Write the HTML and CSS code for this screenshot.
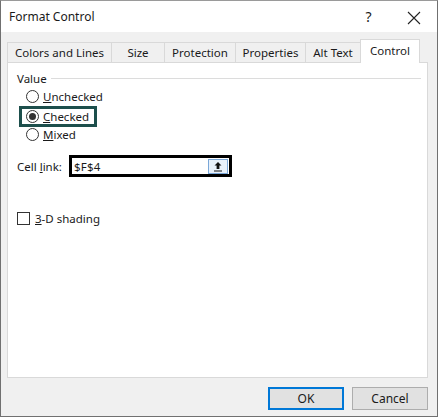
FILE: index.html
```html
<!DOCTYPE html>
<html lang="en">
<head>
    <meta charset="UTF-8">
    <title>Format Control</title>
    <link rel="stylesheet" href="styles.css">
</head>
<body>
    <div class="dialog">
        <div class="titlebar">
            <span class="title">Format Control</span>
            <span class="help">?</span>
            <span class="close">
                <svg width="14" height="14" viewBox="0 0 14 14"><path d="M1 1 L13 13 M13 1 L1 13" stroke="#222" stroke-width="1.1"/></svg>
            </span>
        </div>

        <div class="body">
            <div class="tabs">
                <div class="tab tab-colors">Colors and Lines</div>
                <div class="tab tab-size">Size</div>
                <div class="tab tab-protection">Protection</div>
                <div class="tab tab-properties">Properties</div>
                <div class="tab tab-alt">Alt Text</div>
                <div class="tab tab-control active">Control</div>
            </div>

            <div class="panel">
                <div class="group">
                    <div class="group-title"><span>Value</span></div>
                    <div class="radios">
                        <label class="radio first"><span class="circle"></span><span><u>U</u>nchecked</span></label>
                        <label class="radio highlighted"><span class="circle on"></span><span><u>C</u>hecked</span></label>
                        <label class="radio"><span class="circle"></span><span><u>M</u>ixed</span></label>
                    </div>
                </div>

                <div class="cell-link">
                    <span class="field-label">Cell <u>l</u>ink:</span>
                    <div class="ref-box">
                        <span class="ref-value">$F$4</span>
                        <span class="ref-btn">
                            <svg width="10" height="11" viewBox="0 0 10 11"><path d="M5 1 L1.5 4.5 L3.6 4.5 L3.6 8 L6.4 8 L6.4 4.5 L8.5 4.5 Z" fill="#111"/><rect x="1" y="9.5" width="8" height="1" fill="#111"/></svg>
                        </span>
                    </div>
                </div>

                <label class="checkbox"><span class="box"></span><span><u>3</u>-D shading</span></label>
            </div>

            <div class="footer">
                <button class="btn btn-default">OK</button>
                <button class="btn">Cancel</button>
            </div>
        </div>
    </div>
</body>
</html>
```

FILE: styles.css
```css
* {
    margin: 0;
    padding: 0;
    box-sizing: border-box;
}

body {
    font-family: "Noto Sans", "Open Sans", sans-serif;
    font-size: 11.5px;
    color: #1a1a1a;
    background: #f0f0f0;
}

.dialog {
    width: 438px;
    height: 417px;
    border: 1px solid #707070;
    border-top-color: #9a9a9a;
    background: #f0f0f0;
    display: flex;
    flex-direction: column;
}

.titlebar {
    height: 31px;
    background: white;
    display: flex;
    align-items: center;
    padding-left: 8px;
}

.title {
    font-size: 12px;
    flex: 1;
}

.help {
    font-size: 14px;
    width: 45px;
    text-align: center;
}

.close {
    width: 46px;
    display: flex;
    justify-content: center;
    padding-top: 2px;
}

.body {
    flex: 1;
    padding: 7px 9px 0 6px;
    display: flex;
    flex-direction: column;
}

.tabs {
    display: flex;
    align-items: flex-end;
    height: 23px;
    position: relative;
    z-index: 1;
}

.tab {
    height: 20px;
    border: 1px solid #d9d9d9;
    border-bottom: none;
    border-right: none;
    background: #f0f0f0;
    display: flex;
    align-items: center;
    justify-content: center;
    white-space: nowrap;
}

.tab-colors { width: 104px; }
.tab-size { width: 53px; }
.tab-protection { width: 71px; }
.tab-properties { width: 70px; }
.tab-alt { width: 55px; }

.tab.active {
    width: 60px;
    height: 24px;
    margin-bottom: -1px;
    background: white;
    border-right: 1px solid #d9d9d9;
    padding-bottom: 2px;
}

.panel {
    height: 316px;
    background: white;
    border: 1px solid #d9d9d9;
    padding: 8px 6px 0 9px;
}

.group-title {
    display: flex;
    align-items: center;
    gap: 4px;
    height: 14px;
}

.group-title::after {
    content: "";
    flex: 1;
    border-top: 1px solid #dcdcdc;
}

.radios {
    display: flex;
    flex-direction: column;
    padding: 1px 0 0 2px;
}

.radio {
    display: flex;
    align-items: center;
    gap: 4px;
    height: 19px;
    padding-left: 7px;
    width: 78px;
}

.radio.first {
    height: 20px;
}

.radio.highlighted {
    height: 21px;
    margin-bottom: -2px;
    border: 3px solid #1d4f4c;
    padding-left: 4px;
}

.circle {
    flex-shrink: 0;
    width: 13px;
    height: 13px;
    border: 1px solid #333;
    border-radius: 50%;
    background: white;
    display: flex;
    align-items: center;
    justify-content: center;
}

.circle.on::after {
    content: "";
    width: 7px;
    height: 7px;
    border-radius: 50%;
    background: #333;
}

.cell-link {
    display: flex;
    align-items: center;
    margin-top: 11px;
    height: 22px;
}

.field-label {
    width: 52px;
}

.ref-box {
    width: 163px;
    height: 22px;
    border: 3px solid #000;
    display: flex;
    align-items: center;
    justify-content: space-between;
    padding-left: 2px;
    padding-right: 1px;
}

.ref-value {
    letter-spacing: 0.2px;
}

.ref-btn {
    width: 20px;
    height: 15px;
    background: #e8f1fb;
    border: 1px solid #7aa7d8;
    display: flex;
    align-items: center;
    justify-content: center;
}

.checkbox {
    display: flex;
    align-items: center;
    gap: 5px;
    margin-top: 34px;
}

.box {
    flex-shrink: 0;
    width: 13px;
    height: 13px;
    border: 1px solid #333;
    background: white;
}

.footer {
    display: flex;
    justify-content: flex-end;
    gap: 8px;
    padding-top: 9px;
}

.btn {
    width: 76px;
    height: 23px;
    font-family: inherit;
    font-size: 12px;
    color: #1a1a1a;
    background: #e1e1e1;
    border: 1px solid #adadad;
}

.btn-default {
    border: 2px solid #0078d7;
}
```
